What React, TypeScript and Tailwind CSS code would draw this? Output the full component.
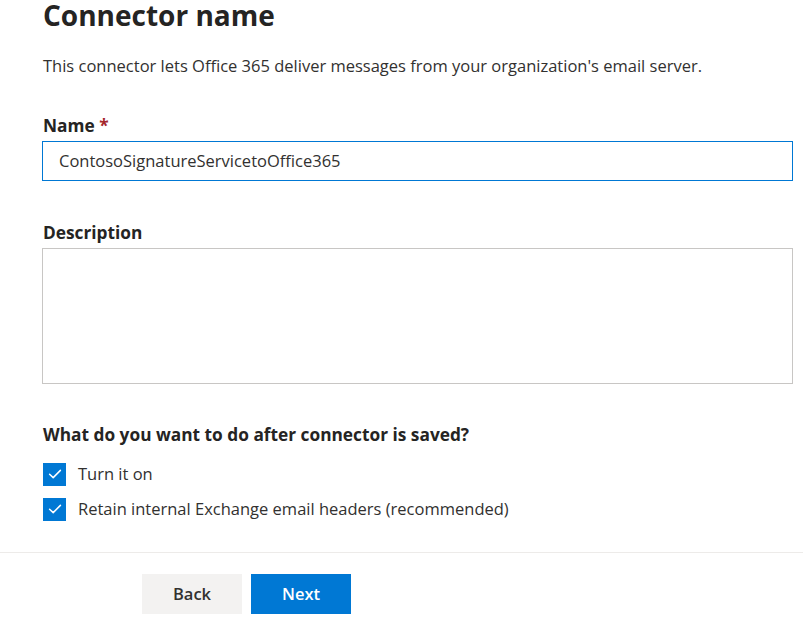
import React from "react";

function Check({ label }: { label: string }) {
  return (
    <div className="flex items-center gap-[12px] h-[24px]">
      <div className="w-[23px] h-[23px] bg-[#0078d4] flex items-center justify-center">
        <svg width="16" height="16" viewBox="0 0 16 16" fill="none">
          <path d="M2.6 8.2 L6.2 11.6 L13.4 4.4" stroke="white" strokeWidth="1.5" strokeLinecap="round" strokeLinejoin="round" />
        </svg>
      </div>
      <span className="text-[16.5px] leading-[22px] text-[#323130]">{label}</span>
    </div>
  );
}

export default function App() {
  return (
    <div className="w-[803px] h-[626px] bg-white font-['Open_Sans',sans-serif] text-[#323130] flex flex-col overflow-hidden">
      <div className="pl-[42px] pr-[10px] flex flex-col">
        <h1 className="text-[28px] font-bold leading-[38px] -mt-[4px] ml-[1px] text-[#252423]">Connector name</h1>
        <p className="text-[16.5px] leading-[20px] mt-[22px] ml-[1px]">
          This connector lets Office 365 deliver messages from your organization's email server.
        </p>
        <div className="mt-[40px] ml-[1px] text-[17.3px] font-bold leading-[20px] text-[#252423]">
          Name <span className="text-[#a4262c]">*</span>
        </div>
        <div className="mt-[5px] h-[40px] border border-[#0078d4] flex items-center pl-[16px] text-[16.5px] text-[#323130]">
          ContosoSignatureServicetoOffice365
        </div>
        <div className="mt-[42px] ml-[1px] text-[17.3px] font-bold leading-[20px] text-[#252423]">Description</div>
        <div className="mt-[5px] h-[136px] border border-[#c8c6c4]"></div>
        <div className="mt-[41px] ml-[1px] text-[17.3px] font-bold leading-[20px] text-[#252423]">
          What do you want to do after connector is saved?
        </div>
        <div className="mt-[17px] flex flex-col gap-[11px] ml-[1px]">
          <Check label="Turn it on" />
          <Check label="Retain internal Exchange email headers (recommended)" />
        </div>
      </div>
      <div className="mt-[31px] border-t border-[#edebe9] pl-[142px] pt-[21px] flex gap-[9px]">
        <button className="w-[100px] h-[40px] bg-[#f3f2f1] text-[16.5px] font-semibold text-[#323130]">Back</button>
        <button className="w-[100px] h-[40px] bg-[#0078d4] text-[16.5px] font-semibold text-white">Next</button>
      </div>
    </div>
  );
}
